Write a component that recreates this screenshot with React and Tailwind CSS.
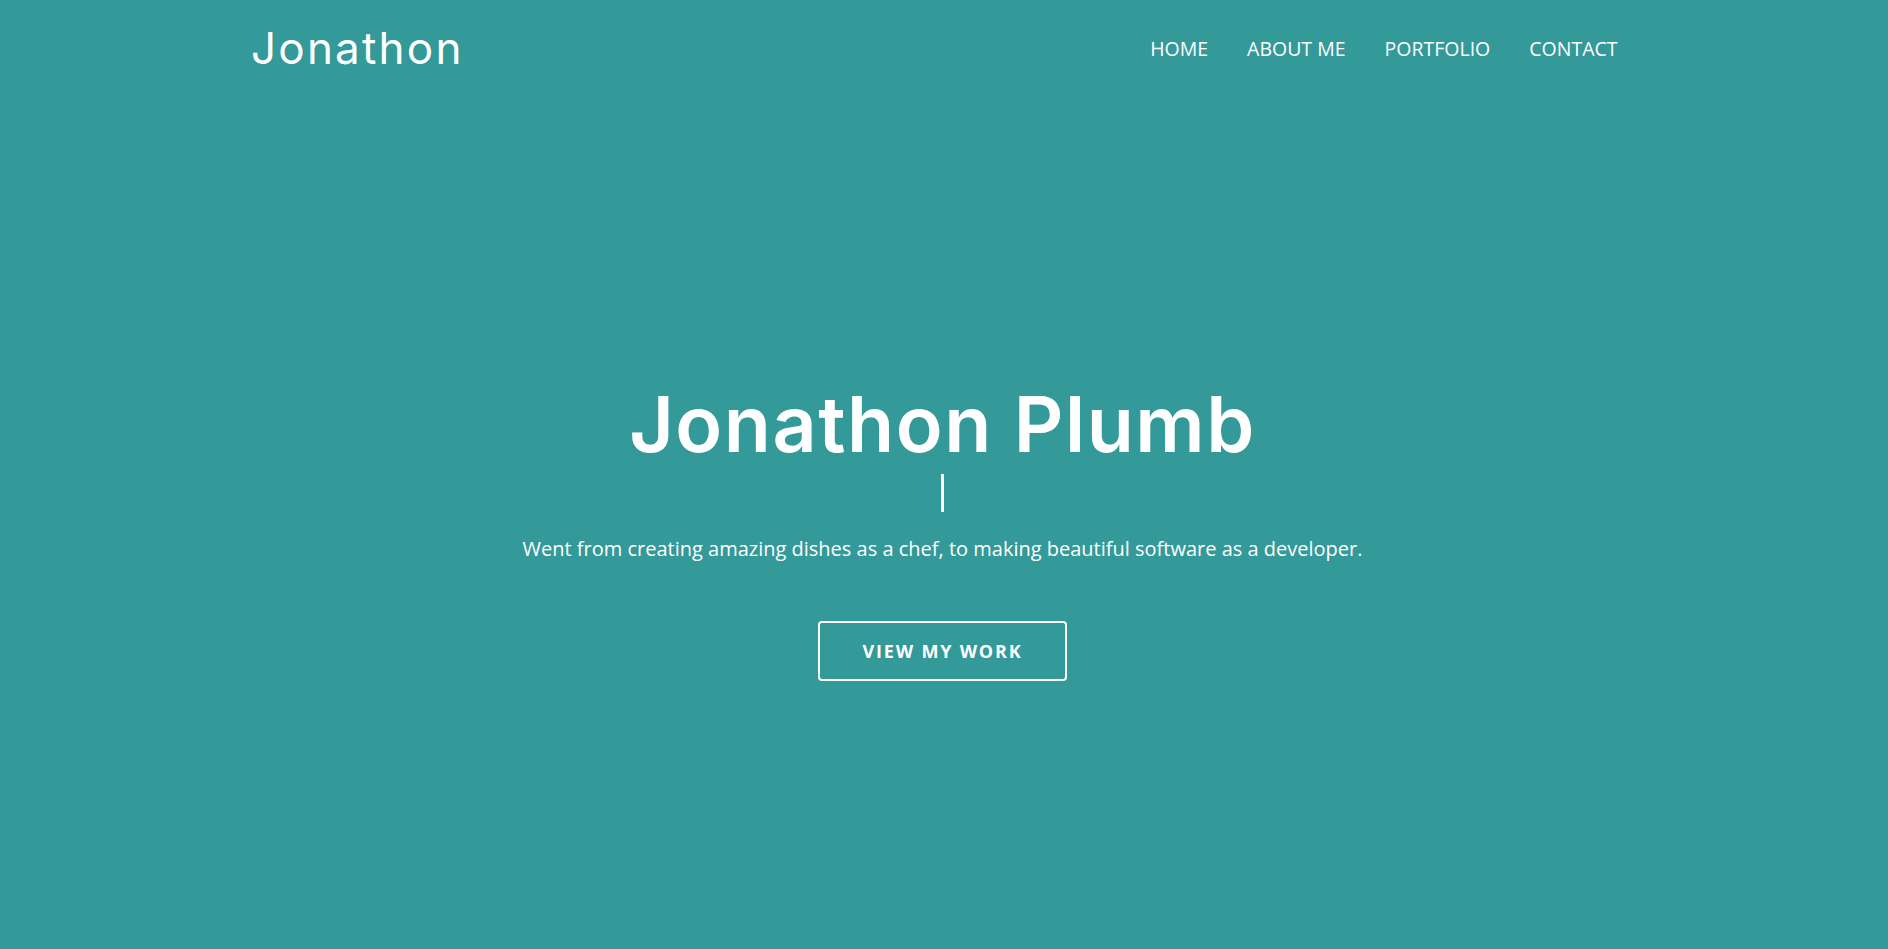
import React from 'react'

const links = ['Home', 'About me', 'Portfolio', 'Contact']

function Header() {
  return (
    <header className="mx-auto flex w-[1386px] items-center justify-between pt-[26px]">
      <a href="#" className="font-['Inter',sans-serif] text-[44px] leading-none tracking-[0.05em] text-white">
        Jonathon
      </a>
      <nav className="flex pt-[2px]">
        {links.map((link) => (
          <a
            key={link}
            href="#"
            className="px-[19.5px] text-[19.5px] leading-none uppercase text-white"
          >
            {link}
          </a>
        ))}
      </nav>
    </header>
  )
}

function Hero() {
  return (
    <section className="flex flex-col items-center pt-[316px] pr-[3px] text-center">
      <h1 className="font-['Inter',sans-serif] text-[77px] font-semibold leading-none tracking-[0.02em] text-white">
        Jonathon Plumb
      </h1>
      {/* typing cursor */}
      <span className="mt-[11px] block h-[38px] w-[3px] bg-white" />
      <p className="mt-[27px] text-[20px] leading-none text-white">
        Went from creating amazing dishes as a chef, to making beautiful software as a developer.
      </p>
      <a
        href="#"
        className="mt-[62px] flex h-[60px] w-[249px] items-center justify-center rounded-[4px] border-2 border-white text-[18px] font-bold uppercase tracking-[0.1em] text-white"
      >
        View my work
      </a>
    </section>
  )
}

export default function App() {
  return (
    <div className="min-h-[949px] bg-[#339999] font-['Open_Sans',sans-serif]">
      <Header />
      <Hero />
    </div>
  )
}
